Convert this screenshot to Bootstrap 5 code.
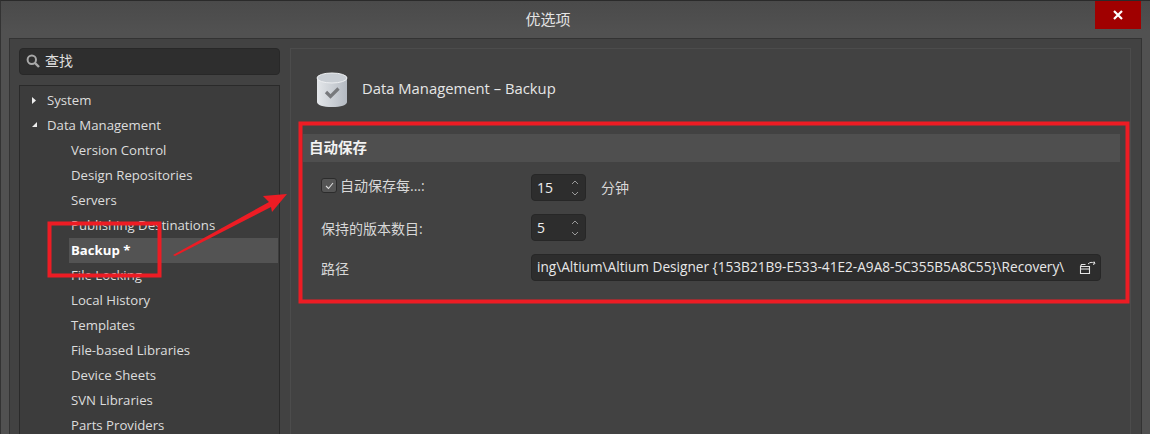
<!DOCTYPE html>
<html lang="zh-CN">
<head>
    <meta charset="UTF-8">
    <title>优选项</title>
    <link href="https://cdn.jsdelivr.net/npm/bootstrap@5.3.0/dist/css/bootstrap.min.css" rel="stylesheet">
    <style>
        html, body { height: 434px; overflow: hidden; background: #505050; }
        body { font-family: "Open Sans", "Noto Sans CJK SC", sans-serif; font-size: 13.5px; color: #dcdcdc; position: relative; }
        .app-window { height: 434px; overflow: hidden; border-top: 1px solid #2a2a2a; border-left: 1px solid #333; background: linear-gradient(#4a4a4a, #515151 30px); }
        .title-bar { height: 37px; }
        .title-text { font-size: 15px; line-height: 36px; color: #e4e4e4; }
        .close-box { width: 46px; height: 28px; background: #a00000; margin-right: 9px; }
        .frame-box { margin: 0 8px 0 8px; padding: 9px; background: #424242; border: 1px solid #333; border-bottom: 0; height: 396px; gap: 10px; }
        .side-col { width: 261px; flex: none; }
        .search-box { height: 27px; background: #2e2e2e; border: 1px solid #282828; border-radius: 4px; padding: 0 0 2px 6px; gap: 5px; color: #dedede; font-size: 14px; }
        .tree-box { height: 349px; overflow: hidden; margin-top: 10px; background: #3c3c3c; border: 1px solid #2a2a2a; border-bottom: 0; padding: 2px 1px 0 0; font-size: 13.2px; }
        .tree-row { height: 25px; line-height: 25px; white-space: nowrap; }
        .tree-top { padding-left: 27px; position: relative; }
        .tree-sub { margin-left: 49px; padding-left: 2px; }
        .tree-sel { background: #535353; color: #fff; font-weight: 700; }
        .tree-arrow { position: absolute; left: 11px; top: 8px; }
        .main-col { width: 841px; flex: none; height: 386px; border: 1px solid #4c4c4c; border-bottom: 0; padding: 0 10px 0 12px; }
        .head-row { height: 85px; padding: 23px 0 0 13px; }
        .head-title { font-size: 14.8px; color: #e6e6e6; margin-left: 14px; margin-top: 5px; }
        .section-head { height: 28px; line-height: 27px; background: #4f4f4f; padding-left: 6px; font-weight: 700; font-size: 14.5px; color: #f2f2f2; }
        .form-gap { height: 12px; }
        .form-line { margin-left: 18px; height: 27px; margin-bottom: 13px; }
        .form-label-box { width: 210px; flex: none; color: #d8d8d8; font-size: 14px; padding-top: 1px; }
        .tick-line { padding: 0 0 4px; }
        .tick-box { width: 16px; height: 15px; background: #555; border: 1px solid #2c2c2c; border-radius: 3px; margin-right: 3px; }
        .spin-box { width: 55px; height: 27px; background: #2d2d2d; border: 1px solid #272727; border-radius: 4px; padding: 0 5px; color: #eee; font-size: 14px; }
        .unit-text { margin-left: 15px; color: #d8d8d8; font-size: 14px; }
        .path-box { width: 570px; height: 27px; background: #2d2d2d; border: 1px solid #272727; border-radius: 4px; padding: 0 3px 0 5px; color: #e8e8e8; font-size: 13.65px; }
        .path-text { white-space: nowrap; overflow: hidden; flex: 1; }
        .mark-layer { position: absolute; left: 0; top: 0; pointer-events: none; }
    </style>
</head>
<body>
    <div class="app-window">
        <div class="title-bar d-flex">
            <div class="title-text flex-grow-1 text-center">优选项</div>
            <div class="close-box d-flex align-items-center justify-content-center">
                <svg width="10" height="10" viewBox="0 0 10 10"><path d="M1 1L9 9M9 1L1 9" stroke="#fff" stroke-width="2.2"/></svg>
            </div>
        </div>
        <div class="frame-box d-flex">
            <div class="side-col">
                <div class="search-box d-flex align-items-center">
                    <svg width="14" height="14" viewBox="0 0 14 14"><circle cx="5.8" cy="5.8" r="4.2" fill="none" stroke="#a8a8a8" stroke-width="2"/><path d="M9 9l4 4" stroke="#a8a8a8" stroke-width="2.4"/></svg>
                    <span>查找</span>
                </div>
                <div class="tree-box">
                    <div class="tree-row tree-top"><svg class="tree-arrow" width="6" height="9" viewBox="0 0 6 9"><path d="M1 1l4 3.5-4 3.5z" fill="#eee"/></svg>System</div>
                    <div class="tree-row tree-top"><svg class="tree-arrow" width="7" height="7" viewBox="0 0 7 7"><path d="M6 1v5H1z" fill="#eee"/></svg>Data Management</div>
                    <div class="tree-row tree-sub">Version Control</div>
                    <div class="tree-row tree-sub">Design Repositories</div>
                    <div class="tree-row tree-sub">Servers</div>
                    <div class="tree-row tree-sub">Publishing Destinations</div>
                    <div class="tree-row tree-sub tree-sel">Backup *</div>
                    <div class="tree-row tree-sub">File Locking</div>
                    <div class="tree-row tree-sub">Local History</div>
                    <div class="tree-row tree-sub">Templates</div>
                    <div class="tree-row tree-sub">File-based Libraries</div>
                    <div class="tree-row tree-sub">Device Sheets</div>
                    <div class="tree-row tree-sub">SVN Libraries</div>
                    <div class="tree-row tree-sub">Parts Providers</div>
                </div>
            </div>
            <div class="main-col">
                <div class="head-row d-flex align-items-start">
                    <svg width="32" height="36" viewBox="0 0 32 36">
                        <defs><linearGradient id="dbFill" x1="0" x2="1" y1="0" y2="0"><stop offset="0" stop-color="#e4e7ea"/><stop offset="1" stop-color="#b4bac2"/></linearGradient></defs>
                        <path d="M1 6v24c0 3 6 5 15 5s15-2 15-5V6z" fill="url(#dbFill)"/>
                        <ellipse cx="16" cy="6" rx="15" ry="5" fill="#c9ced4" stroke="#eef0f2"/>
                        <path d="M10 20l4.500 4.500 8-8" fill="none" stroke="#77797c" stroke-width="3.200"/>
                    </svg>
                    <div class="head-title">Data Management – Backup</div>
                </div>
                <div class="section-head">自动保存</div>
                <div class="form-gap"></div>
                <div class="form-line d-flex align-items-center">
                    <div class="form-label-box tick-line d-flex align-items-center">
                        <span class="tick-box d-flex align-items-center justify-content-center">
                            <svg width="9" height="8" viewBox="0 0 9 8"><path d="M1 4l2.500 2.500L8 1" fill="none" stroke="#ddd" stroke-width="1.100"/></svg>
                        </span>自动保存每...:
                    </div>
                    <div class="spin-box d-flex align-items-center justify-content-between"><span>15</span>
                        <svg width="10" height="20" viewBox="0 0 10 20"><path d="M2 6l3-3 3 3M2 14l3 3 3-3" fill="none" stroke="#999"/></svg></div>
                    <div class="unit-text">分钟</div>
                </div>
                <div class="form-line d-flex align-items-center">
                    <div class="form-label-box">保持的版本数目:</div>
                    <div class="spin-box d-flex align-items-center justify-content-between"><span>5</span>
                        <svg width="10" height="20" viewBox="0 0 10 20"><path d="M2 6l3-3 3 3M2 14l3 3 3-3" fill="none" stroke="#999"/></svg></div>
                </div>
                <div class="form-line d-flex align-items-center">
                    <div class="form-label-box">路径</div>
                    <div class="path-box d-flex align-items-center">
                        <div class="path-text">ing\Altium\Altium Designer {153B21B9-E533-41E2-A9A8-5C355B5A8C55}\Recovery\</div>
                        <svg class="ms-2" width="18" height="14" viewBox="0 0 18 14"><path d="M1.500 5.500h9v7h-9zM1.500 8h9M1.500 5.500l1-2h4" fill="none" stroke="#e4e4e4" stroke-width="1.100"/><path d="M9 3c2-2 4-2 6-1M15 .5l1 2-2 1" fill="none" stroke="#e4e4e4"/></svg>
                    </div>
                </div>
            </div>
        </div>
    </div>
    <svg class="mark-layer" width="1150" height="434" viewBox="0 0 1150 434">
        <rect x="300.500" y="123.500" width="827" height="178" fill="none" stroke="#ed1c24" stroke-width="4"/>
        <rect x="49.500" y="223.500" width="110" height="52" fill="none" stroke="#ed1c24" stroke-width="4"/>
        <path d="M173 255L269 202L263 196L287 194L272 212L271 207L175 256z" fill="#ed1c24"/>
    </svg>
    <script src="https://cdn.jsdelivr.net/npm/bootstrap@5.3.0/dist/js/bootstrap.bundle.min.js"></script>
</body>
</html>
